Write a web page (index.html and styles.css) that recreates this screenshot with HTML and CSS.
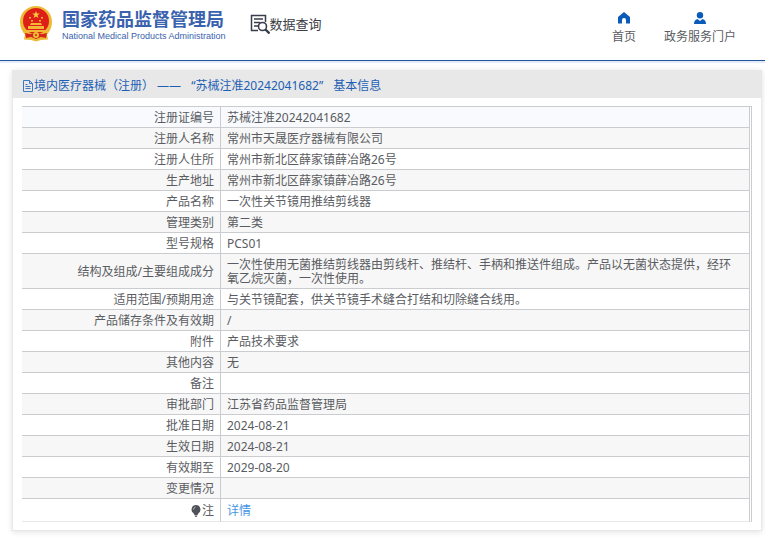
FILE: index.html
```html
<!DOCTYPE html>
<html lang="zh-CN">
<head>
    <meta charset="UTF-8">
    <meta name="viewport" content="width=device-width, initial-scale=1.0">
    <title>国家药品监督管理局 数据查询</title>
    <link rel="stylesheet" href="styles.css">
</head>
<body>
    <header class="header">
        <div class="brand">
            <svg class="emblem" viewBox="0 0 32 36" aria-hidden="true">
                <path d="M16 0C7 0 0 7 0 15.500c0 6 2.500 10.500 5 13L4 33.500l7 .5 5 1.500 5-1.500 7-.5-1-5c2.500-2.500 5-7 5-13C32 7 25 0 16 0z" fill="#ecbb35"/>
                <circle cx="16" cy="15" r="13" fill="#de1f18"/>
                <path d="M16 5l1 2.600h2.800l-2.300 1.700.9 2.700-2.400-1.600-2.400 1.600.9-2.700-2.300-1.700H15z" fill="#f8c93c"/>
                <path d="M9 11h2v1.500H9zM21 11h2v1.500h-2zM11 14h2v1.500h-2zM19 14h2v1.500h-2zM11 17h10l1 2H10zM8 20h16v3H8zM5 24h22v2H5z" fill="#f3b838"/>
                <path d="M5 27l5 1 6-1 6 1 5-1-1 5-5-1-5 2-5-2-5 1z" fill="#d6261a"/>
                <circle cx="16" cy="29" r="3" fill="#efbd34"/>
                <circle cx="16" cy="29" r="1" fill="#d6261a"/>
            </svg>
            <div class="brand-text">
                <span class="brand-cn">国家药品监督管理局</span>
                <span class="brand-en">National Medical Products Administration</span>
            </div>
        </div>
        <div class="query">
            <svg class="query-icon" viewBox="0 0 20 20" aria-hidden="true" fill="none" stroke="#3a3d4c">
                <path d="M8 16.500H1.500v-15h14V8" stroke-width="1.500"/>
                <path d="M4 5h9M4 8.500h6M4 12h4" stroke-width="1.300"/>
                <circle cx="12.500" cy="12.500" r="4" stroke-width="1.600"/>
                <path d="M15.500 15.500l4 4" stroke-width="2.400"/>
            </svg>
            <span>数据查询</span>
        </div>
        <nav class="nav">
            <a href="#">
                <svg width="12" height="12" viewBox="0 0 12 12" aria-hidden="true"><path d="M6 0L0 5v6.500h4V8a2 2 0 0 1 4 0v3.500h4V5z" fill="#0b5cb8"/></svg>
                首页
            </a>
            <a href="#">
                <svg width="12" height="12" viewBox="0 0 12 12" aria-hidden="true"><circle cx="6" cy="3.200" r="3.200" fill="#0b5cb8"/><path d="M3.500 7C1 7.500 0 9.500 0 12h12c0-2.500-1-4.500-3.500-5L6 9z" fill="#0b5cb8"/></svg>
                政务服务门户
            </a>
        </nav>
    </header>
    <main class="card">
        <h1 class="card-title">
            <svg class="doc-icon" width="10" height="12" viewBox="0 0 10 12" aria-hidden="true"><path d="M.5.500h6l3 3v8h-9zM6.500.500v3h3M2.500 4.500h2M2.500 6.500h5M2.500 8.500h5" fill="none" stroke="#3c77c4"/></svg>
            <span>境内医疗器械（注册） ——</span>
            <span class="cert">“苏械注准20242041682”</span>
            <span>基本信息</span>
        </h1>
        <div class="card-body">
            <table class="info">
                <tbody>
                    <tr><th scope="row">注册证编号</th><td>苏械注准20242041682</td></tr>
                    <tr><th scope="row">注册人名称</th><td>常州市天晟医疗器械有限公司</td></tr>
                    <tr><th scope="row">注册人住所</th><td>常州市新北区薛家镇薛冶路26号</td></tr>
                    <tr><th scope="row">生产地址</th><td>常州市新北区薛家镇薛冶路26号</td></tr>
                    <tr><th scope="row">产品名称</th><td>一次性关节镜用推结剪线器</td></tr>
                    <tr><th scope="row">管理类别</th><td>第二类</td></tr>
                    <tr><th scope="row">型号规格</th><td>PCS01</td></tr>
                    <tr><th scope="row">结构及组成/主要组成成分</th><td>一次性使用无菌推结剪线器由剪线杆、推结杆、手柄和推送件组成。产品以无菌状态提供，经环氧乙烷灭菌，一次性使用。</td></tr>
                    <tr><th scope="row">适用范围/预期用途</th><td>与关节镜配套，供关节镜手术缝合打结和切除缝合线用。</td></tr>
                    <tr><th scope="row">产品储存条件及有效期</th><td>/</td></tr>
                    <tr><th scope="row">附件</th><td>产品技术要求</td></tr>
                    <tr><th scope="row">其他内容</th><td>无</td></tr>
                    <tr><th scope="row">备注</th><td></td></tr>
                    <tr><th scope="row">审批部门</th><td>江苏省药品监督管理局</td></tr>
                    <tr><th scope="row">批准日期</th><td>2024-08-21</td></tr>
                    <tr><th scope="row">生效日期</th><td>2024-08-21</td></tr>
                    <tr><th scope="row">有效期至</th><td>2029-08-20</td></tr>
                    <tr><th scope="row">变更情况</th><td></td></tr>
                    <tr class="note">
                        <th scope="row"><svg class="bulb" width="10" height="12" viewBox="0 0 10 12" aria-hidden="true"><path d="M5 0a4.500 4.500 0 0 0-2.500 8.200L3.500 10h3l1-1.800A4.500 4.500 0 0 0 5 0zM3.500 10.500h3L5.500 12h-1z" fill="#4f5258"/><path d="M2.500 4.500Q2.700 2.500 4.500 2" fill="none" stroke="#b9bbc0"/></svg>注</th>
                        <td><a href="#">详情</a></td>
                    </tr>
                </tbody>
            </table>
        </div>
    </main>
</body>
</html>
```

FILE: styles.css
```css
:root {
    --blue: #1d5fb4;
    --line: #cbccd0;
    --text: #5a5c62;
}
* {
    box-sizing: border-box;
}
body {
    margin: 0;
    font-family: "Noto Sans", "Noto Sans CJK SC", sans-serif;
    font-size: 12px;
    line-height: 14px;
    color: var(--text);
    background: #fff;
}
a {
    color: inherit;
    text-decoration: none;
}
.header {
    display: flex;
    align-items: flex-start;
    height: 63px;
    padding: 0 29px 0 20px;
    border-bottom: 2px solid #e3edf9;
    box-shadow: inset 0 -1px #1f5596;
}
.brand {
    display: flex;
    gap: 10px;
    padding-top: 6px;
}
.emblem {
    width: 32px;
    height: 36px;
}
.brand-text {
    display: flex;
    flex-direction: column;
    padding-top: 3px;
    color: #3a62ae;
    white-space: nowrap;
}
.brand-cn {
    font-size: 18px;
    font-weight: bold;
    line-height: 20px;
}
.brand-en {
    font-family: "Liberation Sans", sans-serif;
    font-size: 9px;
    line-height: 14px;
}
.query {
    display: flex;
    align-items: center;
    margin-left: 24px;
    padding-top: 14px;
    font-size: 13px;
    line-height: 20px;
    color: #3a3d44;
    white-space: nowrap;
}
.query-icon {
    width: 20px;
    height: 20px;
}
.nav {
    display: flex;
    gap: 28px;
    margin-left: auto;
    padding-top: 12px;
}
.nav a {
    display: flex;
    flex-direction: column;
    align-items: center;
    gap: 6px;
}
.card {
    margin: 7px 3px 14px 12px;
    border: 1px solid #e8e8e8;
    box-shadow: 0 1px 6px rgba(0, 0, 0, 0.12);
}
.card-title {
    display: flex;
    align-items: center;
    height: 27px;
    margin: 0;
    padding: 2px 10px 0;
    font-size: 12px;
    font-weight: normal;
    color: var(--blue);
    background: #e8e8e8;
}
.doc-icon {
    margin-right: 1px;
}
.cert {
    margin: 0 10px;
}
.card-body {
    padding: 8px 9px;
}
.info {
    width: 100%;
    border-collapse: separate;
    border-spacing: 0;
    border-top: 1px solid var(--line);
    border-right: 3px double var(--line);
}
.info th,
.info td {
    padding: 4px 6px 2px;
    border-bottom: 1px solid var(--line);
    font-weight: normal;
    height: 21px;
}
.info th {
    width: 199px;
    text-align: right;
    border-right: 1px solid var(--line);
}
.info td {
    padding-right: 12px;
}
.info tr:nth-child(even) {
    background: #f7f7f7;
}
.info tr:first-child {
    background: #f8fafd;
}
.info .note th,
.info .note td {
    height: 23px;
    border-bottom-color: #e8e8e8;
}
.info a {
    color: #4595e6;
}
.bulb {
    margin-right: 1px;
    vertical-align: -2px;
}
```
